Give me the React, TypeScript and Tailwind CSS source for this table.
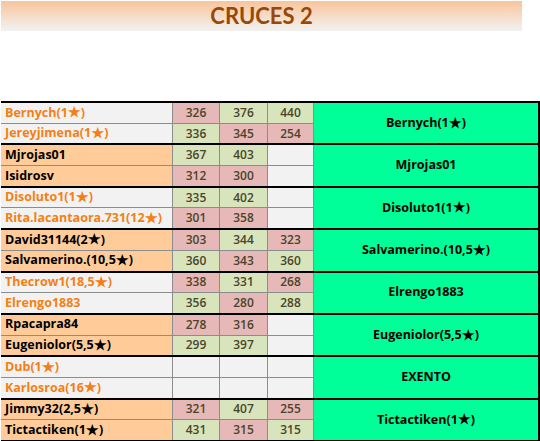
import React from 'react';

type Row = { name: string; scores: (number | null)[]; marks: string };

type Group = { orange: boolean; winner: string; rows: [Row, Row] };

// p = pink (lost), g = green (won), - = empty
const groups: Group[] = [
  {
    orange: true,
    winner: 'Bernych(1★)',
    rows: [
      { name: 'Bernych(1★)', scores: [326, 376, 440], marks: 'pgg' },
      { name: 'Jereyjimena(1★)', scores: [336, 345, 254], marks: 'gpp' },
    ],
  },
  {
    orange: false,
    winner: 'Mjrojas01',
    rows: [
      { name: 'Mjrojas01', scores: [367, 403, null], marks: 'gg-' },
      { name: 'Isidrosv', scores: [312, 300, null], marks: 'pp-' },
    ],
  },
  {
    orange: true,
    winner: 'Disoluto1(1★)',
    rows: [
      { name: 'Disoluto1(1★)', scores: [335, 402, null], marks: 'gg-' },
      { name: 'Rita.lacantaora.731(12★)', scores: [301, 358, null], marks: 'pp-' },
    ],
  },
  {
    orange: false,
    winner: 'Salvamerino.(10,5★)',
    rows: [
      { name: 'David31144(2★)', scores: [303, 344, 323], marks: 'pgp' },
      { name: 'Salvamerino.(10,5★)', scores: [360, 343, 360], marks: 'gpg' },
    ],
  },
  {
    orange: true,
    winner: 'Elrengo1883',
    rows: [
      { name: 'Thecrow1(18,5★)', scores: [338, 331, 268], marks: 'pgp' },
      { name: 'Elrengo1883', scores: [356, 280, 288], marks: 'gpg' },
    ],
  },
  {
    orange: false,
    winner: 'Eugeniolor(5,5★)',
    rows: [
      { name: 'Rpacapra84', scores: [278, 316, null], marks: 'pp-' },
      { name: 'Eugeniolor(5,5★)', scores: [299, 397, null], marks: 'gg-' },
    ],
  },
  {
    orange: true,
    winner: 'EXENTO',
    rows: [
      { name: 'Dub(1★)', scores: [null, null, null], marks: '---' },
      { name: 'Karlosroa(16★)', scores: [null, null, null], marks: '---' },
    ],
  },
  {
    orange: false,
    winner: 'Tictactiken(1★)',
    rows: [
      { name: 'Jimmy32(2,5★)', scores: [321, 407, 255], marks: 'pgp' },
      { name: 'Tictactiken(1★)', scores: [431, 315, 315], marks: 'gpg' },
    ],
  },
];

const cellBg: Record<string, string> = {
  p: 'bg-[#e6b8b7]',
  g: 'bg-[#d8e4bc]',
  '-': 'bg-[#f2f2f2]',
};

const scoreWidths = ['w-[47px]', 'w-[48px]', 'w-[46px]'];

// the star is set in a CJK face so it comes out full width, like the sheet's
const Name: React.FC<{ text: string }> = ({ text }) => {
  const parts = text.split('★');
  if (parts.length === 1) return <>{text}</>;
  return (
    <>
      {parts[0]}
      <span className="relative -top-[2px] font-['Noto_Sans_CJK_JP',sans-serif] text-[13px] leading-none">★</span>
      {parts[1]}
    </>
  );
};

const ScoreRow: React.FC<{ row: Row; orange: boolean; first: boolean }> = ({ row, orange, first }) => (
  <div className={`flex flex-1 ${first ? 'border-b border-[#8c8c8c]' : ''}`}>
    <div
      className={`w-[172px] flex items-center pl-[4px] border-r border-[#8c8c8c] font-bold text-[12.5px] whitespace-nowrap ${
        orange ? 'bg-[#f2f2f2] text-[#f57f12]' : 'bg-[#ffcc99] text-black'
      }`}
    >
      <Name text={row.name} />
    </div>
    {row.scores.map((s, i) => (
      <div
        key={i}
        className={`${scoreWidths[i]} flex items-center justify-center border-r border-[#8c8c8c] font-semibold text-[12px] text-[#4a452a] ${cellBg[row.marks[i]]}`}
      >
        {s ?? ''}
      </div>
    ))}
  </div>
);

export default function App() {
  return (
    <div className="w-[540px] h-[441px] bg-white font-['Open_Sans',sans-serif] leading-none">
      <div className="ml-px pt-px">
        <div className="w-[521px] h-[30px] flex items-center justify-center bg-gradient-to-b from-[#f8c49b] to-[#f2f2f2]">
          <span className="font-['Lato',sans-serif] font-bold text-[22px] text-[#984807]">CRUCES 2</span>
        </div>
      </div>

      <div className="mt-[70px] ml-px w-[539px] border-r-2 border-b-2 border-black">
        {groups.map((g, gi) => (
          <div key={gi} className="flex h-[42.375px] border-t-2 border-black">
            <div className="w-[313px] flex flex-col">
              <ScoreRow row={g.rows[0]} orange={g.orange} first />
              <ScoreRow row={g.rows[1]} orange={g.orange} first={false} />
            </div>
            <div className="flex-1 flex items-center justify-center bg-[#00ff99] font-bold text-[12.5px] text-black">
              <Name text={g.winner} />
            </div>
          </div>
        ))}
      </div>
    </div>
  );
}
